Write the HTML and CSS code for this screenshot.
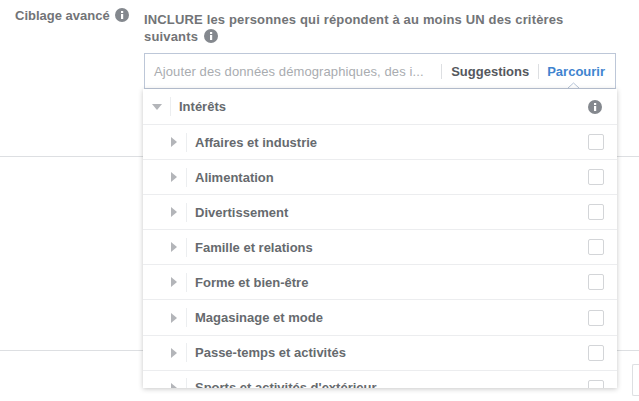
FILE: index.html
```html
<!DOCTYPE html>
<html lang="fr">
<head>
<meta charset="utf-8">
<title>Ciblage avancé</title>
<link rel="stylesheet" href="styles.css">
</head>
<body>
<svg class="defs" width="0" height="0" aria-hidden="true">
  <symbol id="info" viewBox="0 0 14 14">
    <circle cx="7" cy="7" r="7" fill="currentColor"/>
    <rect x="6" y="6" width="2.2" height="5" fill="#fff"/>
    <rect x="6" y="3" width="2.2" height="2" fill="#fff"/>
  </symbol>
</svg>
<main class="page">
  <section class="targeting">
    <div class="label">Ciblage avancé <svg class="info"><use href="#info"/></svg></div>
    <div class="field">
      <p class="intro">INCLURE les personnes qui répondent à au moins UN des critères suivants <svg class="info"><use href="#info"/></svg></p>
      <div class="search">
        <span class="placeholder">Ajouter des données démographiques, des i...</span>
        <span class="tab tab-dark">Suggestions</span>
        <span class="tab tab-blue">Parcourir</span>
        <svg class="caret" width="13" height="6" viewBox="0 0 13 6"><path d="M1 6 6.5 1 12 6" fill="none" stroke="#b4c2d6" stroke-width="1"/></svg>
      </div>
    </div>
  </section>
  <section class="blank"></section>
  <section class="footer"><span class="stub"></span></section>
  <div class="dropdown">
    <div class="row head">
      <span class="arrow-down"></span>
      <span class="name">Intérêts</span>
      <svg class="info info-big"><use href="#info"/></svg>
    </div>
    <div class="row"><span class="arrow"></span><span class="name">Affaires et industrie</span><span class="check"></span></div>
    <div class="row"><span class="arrow"></span><span class="name">Alimentation</span><span class="check"></span></div>
    <div class="row"><span class="arrow"></span><span class="name">Divertissement</span><span class="check"></span></div>
    <div class="row"><span class="arrow"></span><span class="name">Famille et relations</span><span class="check"></span></div>
    <div class="row"><span class="arrow"></span><span class="name">Forme et bien-être</span><span class="check"></span></div>
    <div class="row"><span class="arrow"></span><span class="name">Magasinage et mode</span><span class="check"></span></div>
    <div class="row"><span class="arrow"></span><span class="name">Passe-temps et activités</span><span class="check"></span></div>
    <div class="row"><span class="arrow"></span><span class="name">Sports et activités d'extérieur</span><span class="check"></span></div>
  </div>
</main>
</body>
</html>
```
FILE: styles.css
```css
* { box-sizing: border-box; }
html, body { margin: 0; padding: 0; }
body {
  width: 639px;
  height: 401px;
  overflow: hidden;
  background: #fff;
  font-family: "Liberation Sans", Arial, sans-serif;
  font-size: 13px;
  font-weight: bold;
  color: #727477;
}
.defs { position: absolute; }
.page { position: relative; width: 639px; height: 401px; overflow: hidden; }
.targeting {
  height: 157px;
  display: flex;
  padding: 8px 23px 0 15px;
  border-bottom: 1px solid #dddfe2;
}
.label { width: 129px; line-height: 15px; white-space: nowrap; }
.info { width: 14px; height: 14px; color: #84888e; vertical-align: -2px; margin-left: 2px; }
.field { flex: 1; }
.intro { margin: 3px 0 0; padding-right: 40px; line-height: 17px; letter-spacing: 0.16px; }
.search {
  position: relative;
  display: flex;
  align-items: center;
  height: 36px;
  margin-top: 8px;
  padding-left: 9px;
  border: 1px solid #bdc7d8;
}
.placeholder { flex: 1; font-weight: normal; color: #a9acb0; white-space: nowrap; letter-spacing: 0.1px; }
.tab { padding-left: 9px; border-left: 1px solid #dddfe2; line-height: 15px; }
.tab-dark { color: #55585d; margin-right: 9px; }
.tab-blue { color: #3f84cf; margin-right: 10px; padding-left: 8px; }
.caret { position: absolute; right: 35px; bottom: 0; }
.blank { height: 194px; border-bottom: 1px solid #dddfe2; }
.footer { height: 50px; display: flex; justify-content: flex-end; padding-top: 13px; }
.stub { width: 7px; height: 32px; border: 1px solid #dddfe2; border-right: 0; border-radius: 2px 0 0 2px; }
.dropdown {
  position: absolute;
  left: 143px;
  top: 89px;
  width: 474px;
  height: 299px;
  overflow: hidden;
  background: #fff;
  box-shadow: 0 1px 5px rgba(0, 0, 0, 0.22);
}
.row {
  display: flex;
  align-items: center;
  height: 35.1px;
  padding: 0 13px 0 28px;
  border-bottom: 1px solid #ecedef;
  color: #666a6e;
}
.row.head { height: 36px; padding-left: 9px; padding-right: 15px; }
.name { flex: 1; line-height: 19px; border-left: 1px solid #eceef0; padding-left: 8px; margin-left: 9px; white-space: nowrap; }
.head .name { margin-left: 8px; padding-left: 8px; }
.arrow { width: 0; height: 0; border-left: 6px solid #b3b5b9; border-top: 5px solid transparent; border-bottom: 5px solid transparent; }
.arrow-down { width: 0; height: 0; border-top: 6px solid #b3b5b9; border-left: 5.5px solid transparent; border-right: 5.5px solid transparent; }
.check { width: 16px; height: 16px; border: 1px solid #d3d5d8; border-radius: 2px; }
```
